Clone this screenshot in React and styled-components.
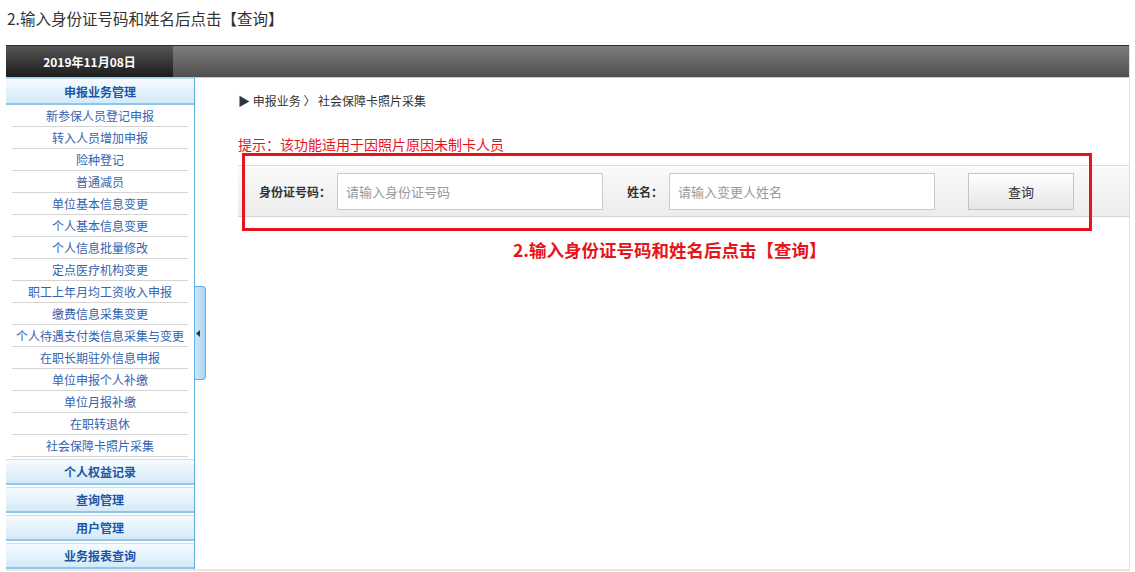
import styled, { createGlobalStyle } from "styled-components";

const GlobalStyle = createGlobalStyle`
  body {
    margin: 0;
    background: #fff;
    font-family: "Noto Sans CJK SC", "Noto Sans", sans-serif;
  }
`;

const menuItems = [
  "新参保人员登记申报",
  "转入人员增加申报",
  "险种登记",
  "普通减员",
  "单位基本信息变更",
  "个人基本信息变更",
  "个人信息批量修改",
  "定点医疗机构变更",
  "职工上年月均工资收入申报",
  "缴费信息采集变更",
  "个人待遇支付类信息采集与变更",
  "在职长期驻外信息申报",
  "单位申报个人补缴",
  "单位月报补缴",
  "在职转退休",
  "社会保障卡照片采集",
];

const groups = ["个人权益记录", "查询管理", "用户管理", "业务报表查询"];

const App = () => {
  return (
    <>
      <GlobalStyle />
      <Caption>2.输入身份证号码和姓名后点击【查询】</Caption>
      <Frame>
        <TopBar>
          <DateCell>2019年11月08日</DateCell>
        </TopBar>
        <Body>
          <Sidebar>
            <GroupHead first>申报业务管理</GroupHead>
            {menuItems.map((item) => (
              <MenuItem key={item}>{item}</MenuItem>
            ))}
            {groups.map((g) => (
              <GroupHead key={g}>{g}</GroupHead>
            ))}
          </Sidebar>
          <ToggleCol>
            <Toggle>
              <svg width="4" height="7" viewBox="0 0 4 7">
                <path d="M4 0 L0 3.5 L4 7 Z" fill="#333" />
              </svg>
            </Toggle>
          </ToggleCol>
          <Main>
            <Crumb>▶ 申报业务 〉 社会保障卡照片采集</Crumb>
            <Tip>提示：该功能适用于因照片原因未制卡人员</Tip>
            <FormBar>
              <Label>身份证号码：</Label>
              <Input placeholder="请输入身份证号码" $w={266} />
              <Label $ml={24}>姓名：</Label>
              <Input placeholder="请输入变更人姓名" $w={266} />
              <QueryButton>查询</QueryButton>
            </FormBar>
            <Annotation>2.输入身份证号码和姓名后点击【查询】</Annotation>
            <RedBox />
          </Main>
        </Body>
      </Frame>
    </>
  );
};

const Caption = styled.p`
  margin: 0;
  padding: 7px 0 0 7px;
  height: 45px;
  box-sizing: border-box;
  font-size: 15.5px;
  line-height: 22px;
  color: #333;
`;

const Frame = styled.div`
  margin-left: 6px;
  width: 1124px;
  height: 526px;
  border-bottom: 2px solid #e8e8e8;
  border-right: 1px solid #e0e0e0;
  box-sizing: border-box;
  display: flex;
  flex-direction: column;
`;

const TopBar = styled.div`
  height: 31px;
  border-top: 1px solid #2e2e2e;
  border-bottom: 1px solid #c8c8c8;
  background: linear-gradient(#7c7c7c, #4f4f4f);
  display: flex;
  flex-shrink: 0;
`;

const DateCell = styled.div`
  width: 167px;
  background: linear-gradient(#555, #1c1c1c);
  color: #fff;
  font-weight: bold;
  font-size: 12px;
  display: flex;
  align-items: center;
  justify-content: center;
`;

const Body = styled.div`
  flex: 1;
  display: flex;
  position: relative;
  overflow: hidden;
`;

const Sidebar = styled.div`
  width: 188px;
  border-right: 1px solid #63b0e3;
  display: flex;
  flex-direction: column;
  flex-shrink: 0;
`;

const GroupHead = styled.div`
  height: ${(p) => (p.first ? "24px" : "23px")};
  margin-top: ${(p) => (p.first ? "0" : "2px")};
  border-top: 1px solid ${(p) => (p.first ? "#b8def6" : "#c2e2f7")};
  border-bottom: 2px solid #8cc7ec;
  background: linear-gradient(#f6fbff, #d4eaf8);
  display: flex;
  align-items: center;
  justify-content: center;
  color: #1d56a6;
  font-weight: bold;
  font-size: 12px;
  flex-shrink: 0;
`;

const MenuItem = styled.div`
  height: 21px;
  margin: 0 6px;
  border-bottom: 1px solid #d4d4d4;
  display: flex;
  align-items: center;
  justify-content: center;
  color: #3563b0;
  font-size: 12px;
  white-space: nowrap;
  flex-shrink: 0;
  &:last-of-type {
    border-bottom-color: #b7d9f0;
  }
`;

const ToggleCol = styled.div`
  width: 11px;
  padding-top: 208px;
  flex-shrink: 0;
`;

const Toggle = styled.div`
  width: 9px;
  height: 92px;
  border: 1px solid #59ace2;
  border-left: none;
  border-radius: 0 4px 4px 0;
  background: linear-gradient(90deg, #cfe8f9, #a9d5f3);
  display: flex;
  align-items: center;
  padding-left: 1px;
`;

const Main = styled.div`
  flex: 1;
  position: relative;
  padding: 15px 0 0 32px;
`;

const Crumb = styled.div`
  font-size: 12px;
  line-height: 16px;
  color: #333;
`;

const Tip = styled.div`
  margin-top: 26px;
  font-size: 14px;
  line-height: 18px;
  color: #e8141b;
`;

const FormBar = styled.div`
  margin-top: 12px;
  height: 50px;
  border-top: 1px solid #dcdcdc;
  border-bottom: 1px solid #d4d4d4;
  background: linear-gradient(#fafafa, #ececec);
  display: flex;
  align-items: center;
  padding-left: 21px;
`;

const Label = styled.span`
  margin-left: ${(p) => p.$ml || 0}px;
  font-size: 12px;
  font-weight: bold;
  color: #333;
  margin-right: 6px;
`;

const Input = styled.input`
  width: ${(p) => p.$w}px;
  height: 37px;
  box-sizing: border-box;
  border: 1px solid #c9c9c9;
  background: #fff;
  padding: 0 8px;
  font-family: inherit;
  font-size: 13px;
  &::placeholder {
    color: #999;
  }
`;

const QueryButton = styled.button`
  margin-left: 33px;
  width: 106px;
  height: 37px;
  border: 1px solid #c4c4c4;
  background: linear-gradient(#fefefe, #e6e6e6);
  font-family: inherit;
  font-size: 13px;
  color: #333;
`;

const Annotation = styled.div`
  margin: 21px 0 0 275px;
  font-size: 17.5px;
  font-weight: bold;
  color: #e8141b;
  line-height: 24px;
  white-space: nowrap;
`;

const RedBox = styled.div`
  position: absolute;
  left: 36px;
  top: 75px;
  width: 850px;
  height: 78px;
  box-sizing: border-box;
  border: 3px solid #e8141b;
  pointer-events: none;
`;

export default App;
